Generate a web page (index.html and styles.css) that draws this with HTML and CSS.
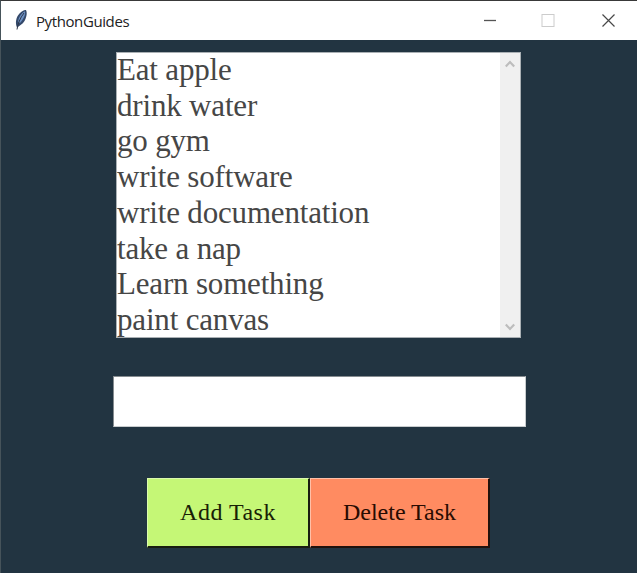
FILE: index.html
```html
<!DOCTYPE html>
<html lang="en">
<head>
<meta charset="utf-8">
<title>PythonGuides</title>
<link rel="stylesheet" href="styles.css">
</head>
<body>
<div class="window">
  <header class="titlebar">
    <svg class="feather" width="16" height="24" viewBox="0 0 16 24">
      <path d="M4 19.500C2 15 3 9 6.500 5.500C9 3 11.500 1.500 13 2C14.500 5 13.500 9.500 11.500 13C9.500 16.500 6.500 17.500 4 19.500Z" fill="#34496b"/>
      <path d="M5 14C5.500 9.500 8 5.500 11.800 3.200C13 6 10.500 11 7 15Z" fill="#6c91c4"/>
      <path d="M4 21.500C4.800 16 7 10 11 5" fill="none" stroke="#30384a" stroke-width="1"/>
    </svg>
    <h1 class="title">PythonGuides</h1>
    <svg class="controls" width="150" height="38" viewBox="0 0 150 38" fill="none">
      <path d="M-0.500 18.500H12" stroke="#555" stroke-width="1.300"/>
      <rect x="58" y="12.500" width="12" height="12" stroke="#ccc"/>
      <path d="M118.500 12.500L130.500 24.500M130.500 12.500L118.500 24.500" stroke="#484848" stroke-width="1.200"/>
    </svg>
  </header>
  <main class="content">
    <div class="listbox">
      <ul class="tasks">
        <li>Eat apple</li>
        <li>drink water</li>
        <li>go gym</li>
        <li>write software</li>
        <li>write documentation</li>
        <li>take a nap</li>
        <li>Learn something</li>
        <li>paint canvas</li>
      </ul>
      <div class="scrollbar">
        <svg width="10" height="8" viewBox="0 0 10 8"><path d="M0.800 6.500L5 2L9.200 6.500" fill="none" stroke="#bdbdbd" stroke-width="2.200"/></svg>
        <svg width="10" height="8" viewBox="0 0 10 8"><path d="M0.800 1.500L5 6L9.200 1.500" fill="none" stroke="#bdbdbd" stroke-width="2.200"/></svg>
      </div>
    </div>
    <input class="entry" type="text" aria-label="Task">
    <div class="actions">
      <button class="btn add">Add Task</button>
      <button class="btn delete">Delete Task</button>
    </div>
  </main>
</div>
</body>
</html>
```
FILE: styles.css
```css
* { box-sizing: border-box; }
body { margin: 0; overflow: hidden; background: #223441; }
.window {
  width: 637px;
  height: 573px;
  border-top: 1px solid #393939;
  border-left: 1px solid #46535a;
  background: #223441;
}
.titlebar {
  display: flex;
  align-items: center;
  height: 39px;
  padding: 0 3px 0 12px;
  background: #fff;
}
.feather { display: block; margin: -1px 7px 0 0; }
.title {
  margin: 0;
  font: 400 15px/38px "Open Sans", "Noto Sans", sans-serif;
  letter-spacing: -0.4px;
  color: #222;
}
.controls { display: block; margin-left: auto; }
.content {
  display: flex;
  flex-direction: column;
  align-items: center;
  padding-top: 12px;
}
.listbox {
  display: flex;
  width: 405px;
  height: 286px;
  margin-right: 1px;
  border: 1px solid #aab0b4;
  background: #fff;
}
.tasks {
  flex: 1;
  margin: -1px 0 0;
  padding: 0;
  list-style: none;
  font: 31px/35.7px "Liberation Serif", serif;
  letter-spacing: -0.18px;
  color: #464646;
  white-space: nowrap;
}
.scrollbar {
  display: flex;
  flex-direction: column;
  justify-content: space-between;
  align-items: center;
  width: 20px;
  padding: 7px 0 6px;
  background: #f0f0f0;
}
.scrollbar svg { display: block; }
.entry {
  width: 413px;
  height: 51px;
  margin: 38px 0 51px 1px;
  padding: 0 4px;
  border: 1px solid;
  border-color: #868c90 #c8ccce #c8ccce #868c90;
  border-radius: 0;
  font: 31px "Liberation Serif", serif;
  background: #fff;
}
.actions { display: flex; margin-right: 1px; }
.btn {
  height: 70px;
  padding: 0;
  border: 2px solid;
  border-radius: 0;
  font: 24px "Liberation Serif", serif;
}
.add {
  width: 163px;
  background: #c5f776;
  border-width: 1px 2px 2px 1px;
  border-color: #dcfaad #181d10 #181d10 #dcfaad;
  color: #182005;
  letter-spacing: 0.5px;
}
.delete {
  width: 180px;
  background: #ff8b61;
  border-width: 1px 2px 2px 1px;
  border-color: #ffc0a8 #20120d #20120d #ffc0a8;
  color: #280b02;
}
```
